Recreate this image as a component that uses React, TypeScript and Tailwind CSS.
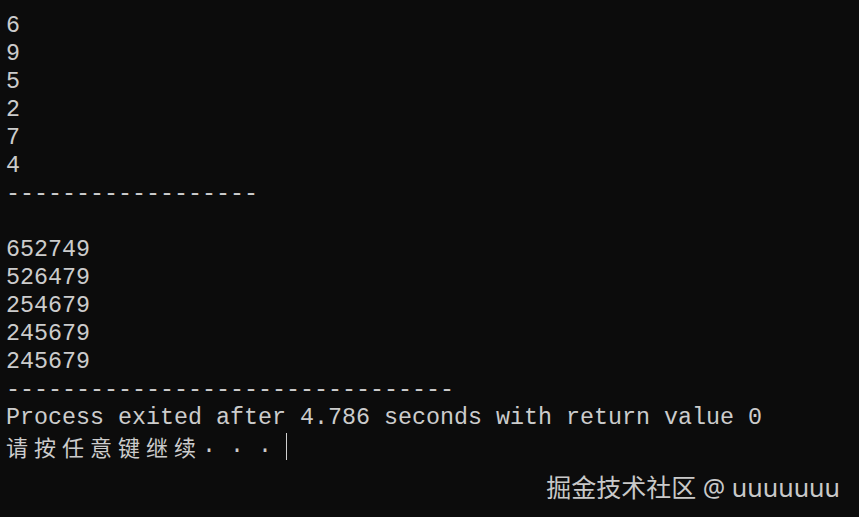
import React from 'react';

const mono = "font-['Liberation_Mono','DejaVu_Sans_Mono',monospace]";

const lines = [
  '6',
  '9',
  '5',
  '2',
  '7',
  '4',
  '-'.repeat(18),
  '',
  '652749',
  '526479',
  '254679',
  '245679',
  '245679',
  '-'.repeat(32),
  'Process exited after 4.786 seconds with return value 0',
];

export default function App() {
  return (
    <div className="w-[859px] h-[517px] bg-[#0c0c0c] text-[#cccccc] flex flex-col overflow-hidden">
      <div className={`${mono} pt-[12px] pl-[6px] text-[23.33px] leading-[28px] whitespace-pre`}>
        {lines.map((line, i) => (
          <div key={i} className="h-[28px]">
            {line}
          </div>
        ))}
        {/* pause prompt with cursor */}
        <div className="h-[28px] flex items-center">
          <span className="font-['Noto_Sans_CJK_SC',sans-serif] text-[22px] tracking-[6px]">
            请按任意键继续
          </span>
          <span>. . . </span>
          <span className="w-px h-[27px] bg-[#d0d0d0]" />
        </div>
      </div>

      {/* watermark */}
      <div className="mt-[11px] flex justify-end pr-[19px]">
        <span className="font-['Noto_Sans','Noto_Sans_CJK_SC',sans-serif] text-[25px] leading-[30px] text-[#c9c9c9]">
          <span className="font-['Noto_Sans_CJK_SC',sans-serif]">掘金技术社区</span> @ uuuuuuu
        </span>
      </div>
    </div>
  );
}
